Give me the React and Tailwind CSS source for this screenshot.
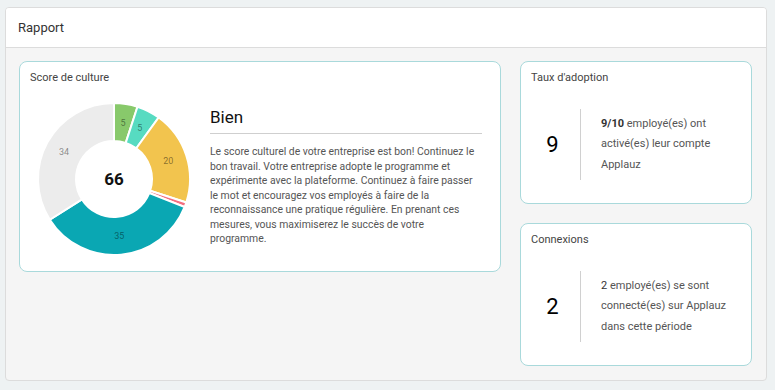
import React from 'react';

const slices = [
  { value: 5, color: '#88c96b', label: '5' },
  { value: 5, color: '#57dbc1', label: '5' },
  { value: 20, color: '#f2c44e', label: '20' },
  { value: 1, color: '#f36f80', label: '' },
  { value: 35, color: '#0aa7b3', label: '35' },
  { value: 34, color: '#ececec', label: '34' }
];

function point(cx, cy, r, deg) {
  const rad = ((deg - 90) * Math.PI) / 180;
  return [cx + r * Math.cos(rad), cy + r * Math.sin(rad)];
}

function arc(cx, cy, ro, ri, start, end) {
  const large = end - start > 180 ? 1 : 0;
  const [x1, y1] = point(cx, cy, ro, start);
  const [x2, y2] = point(cx, cy, ro, end);
  const [x3, y3] = point(cx, cy, ri, end);
  const [x4, y4] = point(cx, cy, ri, start);
  return `M${x1} ${y1} A${ro} ${ro} 0 ${large} 1 ${x2} ${y2} L${x3} ${y3} A${ri} ${ri} 0 ${large} 0 ${x4} ${y4} Z`;
}

function Donut() {
  const total = slices.reduce((sum, s) => sum + s.value, 0);
  let angle = 0;
  const cx = 78;
  const cy = 78;
  return (
    <svg width="156" height="156" viewBox="0 0 156 156" className="shrink-0">
      {slices.map((s, i) => {
        const start = angle;
        const end = angle + (s.value / total) * 360;
        angle = end;
        const [lx, ly] = point(cx, cy, 57, (start + end) / 2);
        return (
          <g key={i}>
            <path d={arc(cx, cy, 76, 38, start, end)} fill={s.color} stroke="#fff" strokeWidth="2" />
            {s.label && (
              <text x={lx} y={ly + 3} textAnchor="middle" fontSize="9" fill="rgba(0,0,0,0.45)" fontFamily="Roboto, sans-serif">
                {s.label}
              </text>
            )}
          </g>
        );
      })}
      <text x={cx} y={cy + 6} textAnchor="middle" fontSize="17" fontWeight="700" fill="#111" fontFamily="Roboto, sans-serif">
        66
      </text>
    </svg>
  );
}

function StatCard({ title, number, children }) {
  return (
    <div className="h-[143px] rounded-lg border border-[#a9d9db] bg-white">
      <div className="px-[10px] pt-[9px] text-[11px] leading-[14px] text-[#444]">{title}</div>
      <div className="mt-[24px] flex items-center">
        <div className="w-[59px] pl-[4px] text-center text-[22px] leading-none text-black">{number}</div>
        <div className="h-[71px] w-px bg-[#d0d0d0]" />
        <p className="ml-[20px] flex-1 pr-[14px] text-[11px] leading-[20.5px] text-[#555]">{children}</p>
      </div>
    </div>
  );
}

export default function App() {
  return (
    <div className="min-h-[390px] bg-[#eef2f3] px-[5px] pt-[7px] font-['Roboto',sans-serif]">
      <div className="h-[374px] w-[762px] overflow-hidden rounded-[4px] border border-[#dcdcdc] bg-[#f5f5f5]">
        <div className="flex h-[40px] items-center border-b border-[#dcdcdc] bg-white px-[12px] text-[13px] text-[#333]">
          Rapport
        </div>
        <div className="flex gap-[19px] px-[13px] pt-[13px]">
          <div className="h-[211px] w-[482px] rounded-lg border border-[#a9d9db] bg-white">
            <div className="px-[10px] pt-[9px] text-[11px] leading-[14px] text-[#444]">Score de culture</div>
            <div className="mt-[16px] flex pl-[16px]">
              <Donut />
              <div className="ml-[18px] w-[272px] pt-[5px]">
                <div className="border-b border-[#cfcfcf] pb-[5px] text-[17px] leading-[22px] text-[#111]">Bien</div>
                <p className="mt-[11px] text-[10.4px] leading-[14.5px] text-[#555]">
                  Le score culturel de votre entreprise est bon! Continuez le bon travail. Votre entreprise adopte le
                  programme et expérimente avec la plateforme. Continuez à faire passer le mot et encouragez vos
                  employés à faire de la reconnaissance une pratique régulière. En prenant ces mesures, vous
                  maximiserez le succès de votre programme.
                </p>
              </div>
            </div>
          </div>
          <div className="flex w-[232px] flex-col gap-[19px]">
            <StatCard title="Taux d'adoption" number="9">
              <span className="font-bold text-[#333]">9/10</span> employé(es) ont activé(es) leur compte Applauz
            </StatCard>
            <StatCard title="Connexions" number="2">
              <span className="text-[#333]">2</span> employé(es) se sont connecté(es) sur Applauz dans cette période
            </StatCard>
          </div>
        </div>
      </div>
    </div>
  );
}
